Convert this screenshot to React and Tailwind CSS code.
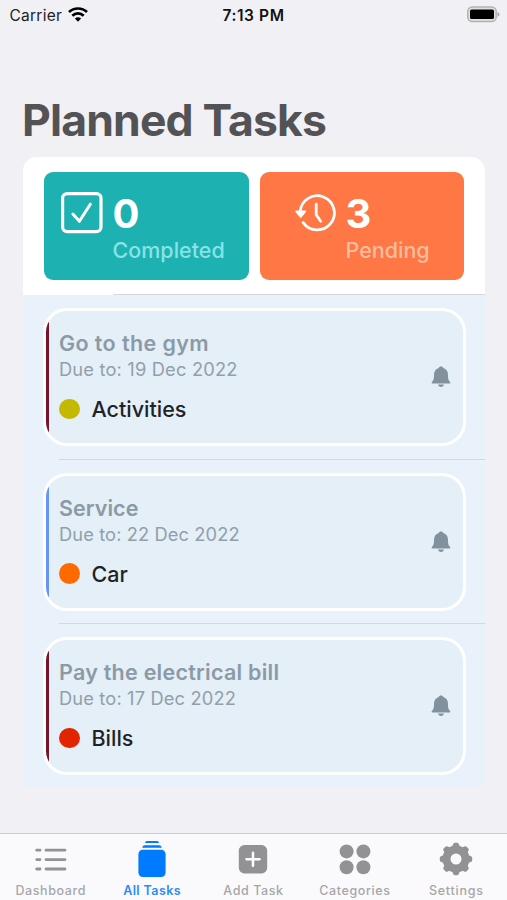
import React from "react";

const tasks = [
  { title: "Go to the gym", due: "Due to: 19 Dec 2022", category: "Activities", dot: "bg-[#c4b900]", bar: "bg-[#74152a]", track: "tracking-[0.4px]", dueTrack: "tracking-[0.17px]" },
  { title: "Service", due: "Due to: 22 Dec 2022", category: "Car", dot: "bg-[#ff6a00]", bar: "bg-[#6595f5]", track: "tracking-[0.05px]", dueTrack: "tracking-[0.1px]" },
  { title: "Pay the electrical bill", due: "Due to: 17 Dec 2022", category: "Bills", dot: "bg-[#e32400]", bar: "bg-[#74152a]", track: "tracking-[0.25px]", dueTrack: "tracking-[0.14px]" },
];

function WifiIcon() {
  return (
    <svg className="ml-[6px] h-[16px] w-[20px]" viewBox="0 0 20 16" fill="none" stroke="#000" strokeWidth="2.7">
      <path d="M1 5C6 .3 14 .3 19 5" />
      <path d="M4.3 8.7C7.6 5.6 12.4 5.6 15.7 8.7" />
      <path d="M6.9 11.5C8.7 9.8 11.3 9.8 13.1 11.5L10 14.7Z" fill="#000" stroke="none" />
    </svg>
  );
}

function BatteryIcon() {
  return (
    <svg className="h-[18px] w-[33px]" viewBox="0 0 33 18">
      <rect x=".8" y="1" width="28.4" height="14.6" rx="4.6" fill="#e0e0e3" stroke="#b2b2b4" strokeWidth="1.5" />
      <rect x="3" y="3.5" width="24" height="9.6" rx="1.6" fill="#000" />
      <path d="M30.5 6.1q2 .7 2 2.3t-2 2.3z" fill="#a9a9ab" />
    </svg>
  );
}

function CheckIcon() {
  return (
    <svg className="h-[42px] w-[42px]" viewBox="0 0 42 42" fill="none" stroke="#fff" strokeLinecap="round" strokeLinejoin="round">
      <rect x="1.6" y="1.6" width="38.4" height="38" rx="4.6" strokeWidth="3.2" />
      <path d="M11.9 22L18.4 29.3L29.3 12.2" strokeWidth="3" />
    </svg>
  );
}

function HistoryIcon() {
  return (
    <svg className="h-[40px] w-[42px]" viewBox="0 0 42 40" fill="none" stroke="#fff" strokeLinecap="round" strokeLinejoin="round">
      <path d="M5.2 17.5A17.1 17.1 0 1 1 8.2 28.6" strokeWidth="2.8" />
      <path d="M1.2 17.4H10.2L5.7 23Z" fill="#fff" strokeWidth="1.8" />
      <path d="M21.2 10.2V20.8L25.7 27.2" strokeWidth="2.8" />
    </svg>
  );
}

function BellIcon() {
  return (
    <svg className="h-[22px] w-[20px] shrink-0" viewBox="0 0 20 22" fill="#82919e">
      <path d="M10 .5C11.3.5 12 1.1 12.2 1.9C15.4 2.8 17 5.4 17 8.8C17 13 17.4 14.3 18.9 15.7C19.8 16.6 19.4 17.4 18.4 17.4H1.6C.6 17.4.2 16.6 1.1 15.7C2.6 14.3 3 13 3 8.8C3 5.4 4.6 2.8 7.8 1.9C8 1.1 8.7.5 10 .5Z" />
      <path d="M7 18.5H13C12.7 20 11.6 20.9 10 20.9S7.3 20 7 18.5Z" />
    </svg>
  );
}

function Stat({ color, icon, value, label, labelClass, pad }) {
  return (
    <div className={`flex h-[107.5px] w-[204.5px] shrink-0 rounded-[9px] ${pad} ${color}`}>
      {icon}
      <div className="flex flex-col pt-[17px]">
        <span className="text-[40px] leading-[49px] font-bold text-white">{value}</span>
        <span className={`text-[21.5px] leading-[24px] font-medium whitespace-nowrap ${labelClass}`}>{label}</span>
      </div>
    </div>
  );
}

function Task({ task, last }) {
  return (
    <li className={`flex flex-col ${last ? "h-[163.5px]" : "h-[164.5px]"}`}>
      <div className="mt-[13px] ml-[20px] h-[138px] w-[423px] rounded-[24px] bg-white p-[3px]">
        <div className="flex h-full overflow-hidden rounded-[21px] bg-[#e4eff7]">
          <div className={`w-[2.5px] shrink-0 ${task.bar}`} />
          <div className="flex flex-1 flex-col pt-[18px] pl-[10.5px]">
            <span className={`text-[21.5px] leading-[28px] font-semibold whitespace-nowrap text-[#8b9aa6] ${task.track}`}>{task.title}</span>
            <span className={`text-[18.3px] leading-[24px] whitespace-nowrap text-[#929fab] ${task.dueTrack}`}>{task.due}</span>
            <div className="mt-[13px] flex items-center">
              <span className={`h-[20.5px] w-[20.5px] rounded-full ${task.dot}`} />
              <span className="ml-[12px] text-[21.5px] leading-[30px] font-medium text-[#1f2327]">{task.category}</span>
            </div>
          </div>
          <div className="flex items-center pr-[12px]">
            <BellIcon />
          </div>
        </div>
      </div>
      {!last && <div className="mt-auto ml-[36px] h-[1px] bg-[#d0d9e4]" />}
    </li>
  );
}

const gearTeeth = [0, 45, 90, 135, 180, 225, 270, 315];

const tabs = [
  {
    label: "Dashboard", track: "tracking-[0.6px]",
    icon: (
      <g stroke="#929295" strokeWidth="2.8" strokeLinecap="round">
        <path d="M5.7 10.2H9M15 10.2H34M5.7 19.6H9M15 19.6H34M5.7 29H9M15 29H34" />
      </g>
    ),
  },
  {
    label: "All Tasks", track: "tracking-[0.4px]", active: true,
    icon: (
      <g fill="#007aff">
        <path d="M13 3Q13.3 1 15 1H25Q26.7 1 27 3Z" />
        <path d="M10.2 7.7Q10.6 5.3 13 5.3H27Q29.4 5.3 29.8 7.7Z" />
        <rect x="6.4" y="9.8" width="27.2" height="27.2" rx="4.4" />
      </g>
    ),
  },
  {
    label: "Add Task", track: "tracking-[0.6px]",
    icon: (
      <g>
        <rect x="5.8" y="5" width="28.4" height="28.4" rx="5.6" fill="#929295" />
        <path d="M20 12.8V25.8M13.5 19.3H26.5" stroke="#fff" strokeWidth="2.5" strokeLinecap="round" />
      </g>
    ),
  },
  {
    label: "Categories", track: "tracking-[0.6px]",
    icon: (
      <g fill="#929295">
        <circle cx="11.6" cy="11.4" r="7" />
        <circle cx="28.4" cy="11.4" r="7" />
        <circle cx="11.6" cy="27.2" r="7" />
        <circle cx="28.4" cy="27.2" r="7" />
      </g>
    ),
  },
  {
    label: "Settings", track: "tracking-[0.75px]",
    icon: (
      <g fill="#929295">
        <circle cx="20" cy="19" r="9.5" fill="none" stroke="#929295" strokeWidth="8" />
        {gearTeeth.map((a) => (
          <path key={a} transform={`rotate(${a} 20 19)`} d="M15.8 8L17 4.4Q17.4 2.8 18.8 2.8H21.2Q22.6 2.8 23 4.4L24.2 8Z" />
        ))}
      </g>
    ),
  },
];

export default function App() {
  return (
    <div className="flex h-[900px] w-[507px] flex-col overflow-hidden bg-[#f1f0f5] font-['Inter','Liberation_Sans',sans-serif]">
      <header className="grid h-[30px] grid-cols-3 items-center px-[9.5px]">
        <div className="flex items-center text-[15.5px] text-[#222]">
          <span className="pt-[1px] tracking-[0.25px]">Carrier</span>
          <WifiIcon />
        </div>
        <span className="pt-[1px] text-center text-[15.5px] font-semibold tracking-[0.6px] whitespace-nowrap text-[#111]">7:13 PM</span>
        <div className="-mr-[2px] flex justify-end pb-[1px]"><BatteryIcon /></div>
      </header>

      <h1 className="mt-[60px] ml-[22px] text-[44.5px] leading-[60px] font-bold tracking-[-0.85px] whitespace-nowrap text-[#535355]">Planned Tasks</h1>

      <main className="mt-[7px] ml-[23px] w-[462px]">
        <section className="rounded-t-[14px] bg-white">
          <div className="flex h-[137px] gap-[11px] px-[21px] pt-[15px]">
            <Stat
              color="bg-[#1eb1b1]" value="0" label="Completed" labelClass="text-[#87e3e6]" pad="gap-[9.5px] pl-[17px]"
              icon={<div className="shrink-0 pt-[20px]"><CheckIcon /></div>}
            />
            <Stat
              color="bg-[#ff7744]" value="3" label="Pending" labelClass="text-[#ffbda0]" pad="gap-[9px] pl-[35px]"
              icon={<div className="shrink-0 pt-[21.5px]"><HistoryIcon /></div>}
            />
          </div>
          <div className="ml-[90px] h-[1px] bg-[#d4d8dc]" />
        </section>
        <ul className="rounded-b-[6px] bg-[#e9f1fb]">
          {tasks.map((t, i) => <Task key={t.title} task={t} last={i === tasks.length - 1} />)}
        </ul>
      </main>

      <nav className="mt-auto grid h-[67px] grid-cols-5 border-t border-[#cacace] bg-[#fafafc]">
        {tabs.map((t) => (
          <div key={t.label} className="flex flex-col items-center pt-[6px]">
            <svg className="h-[40px] w-[40px]" viewBox="0 0 40 40">{t.icon}</svg>
            <span className={`mt-[2.5px] text-[12.5px] leading-[16px] whitespace-nowrap ${t.track} ${t.active ? "font-semibold text-[#2d8bfa]" : "font-medium text-[#a6a6a9]"}`}>{t.label}</span>
          </div>
        ))}
      </nav>
    </div>
  );
}
